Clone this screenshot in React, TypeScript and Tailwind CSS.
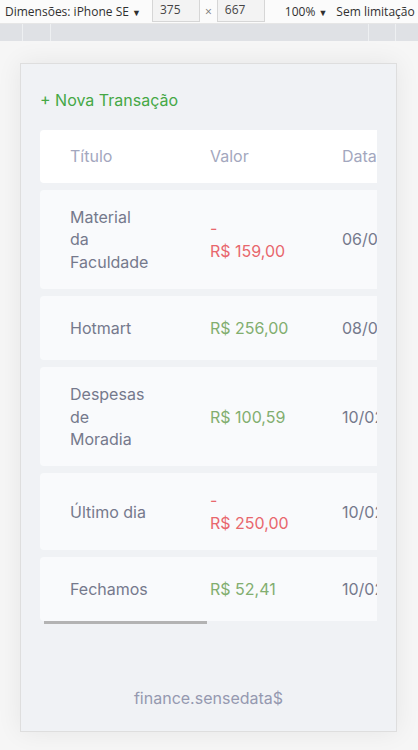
import React from "react";

type Row = { title: string[]; value: string[]; kind: "in" | "out"; date: string };

const rows: Row[] = [
  { title: ["Material", "da", "Faculdade"], value: ["-", "R$ 159,00"], kind: "out", date: "06/02/2021" },
  { title: ["Hotmart"], value: ["R$ 256,00"], kind: "in", date: "08/02/2021" },
  { title: ["Despesas", "de", "Moradia"], value: ["R$ 100,59"], kind: "in", date: "10/02/2021" },
  { title: ["Último dia"], value: ["-", "R$ 250,00"], kind: "out", date: "10/02/2021" },
  { title: ["Fechamos"], value: ["R$ 52,41"], kind: "in", date: "10/02/2021" },
];

function DevToolbar() {
  return (
    <div className="font-['Open_Sans','Liberation_Sans',sans-serif] text-[12px] text-[#303030]">
      <div className="flex h-[24px] items-center overflow-hidden whitespace-nowrap border-b border-[#e6e6e6] bg-[#fbfbfb]">
        <span className="ml-[5px] shrink-0">
          Dimensões: iPhone SE <span className="text-[9px]">▼</span>
        </span>
        <div className="ml-[11px] -mt-[4px] flex h-[24px] w-[48px] shrink-0 items-center border border-[#d6d6d6] bg-[#f3f3f3] pl-[7px] text-[#444]">375</div>
        <span className="mx-[5px] shrink-0 text-[#777]">×</span>
        <div className="-mt-[4px] flex h-[24px] w-[48px] shrink-0 items-center border border-[#d6d6d6] bg-[#f3f3f3] pl-[7px] text-[#444]">667</div>
        <span className="ml-[20px] shrink-0">
          100% <span className="text-[9px]">▼</span>
        </span>
        <span className="ml-[9px] shrink-0">
          Sem limitação <span className="text-[9px]">▼</span>
        </span>
      </div>
      <div className="flex h-[17px] bg-[#dfe1e5]">
        <div className="ml-[22px] w-[1px] bg-[#eef0f2]" />
        <div className="ml-[27px] w-[1px] bg-[#eef0f2]" />
        <div className="ml-auto w-[1px] bg-[#eef0f2]" />
        <div className="ml-[26px] mr-[22px] w-[1px] bg-[#eef0f2]" />
      </div>
    </div>
  );
}

function Lines({ lines }: { lines: string[] }) {
  return (
    <>
      {lines.map((l, i) => (
        <span key={i} className="block whitespace-nowrap">
          {l}
        </span>
      ))}
    </>
  );
}

export default function App() {
  return (
    <div className="min-h-screen bg-[#f6f6f6]">
      <DevToolbar />
      <div className="pl-[20px] pt-[22px]">
        <div className="flex h-[669px] w-[377px] flex-col border border-[#dedede] bg-[#f0f2f5] px-[19px] pt-[24px] font-['Inter','Noto_Sans',sans-serif] shadow-[0_0_24px_rgba(0,0,0,0.07)]">
          <button className="self-start text-[16px] leading-[24px] text-[#45a845]">+ Nova Transação</button>

          <div className="mt-[18px] w-[337px] overflow-hidden">
            <div className="flex w-[680px] flex-col gap-[7px] text-[16px] leading-[22.4px]">
              <div className="flex h-[53px] items-center rounded-[4px] bg-white text-[#a3a7be]">
                <div className="w-[140px] px-[30px]">Título</div>
                <div className="w-[132px] px-[30px]">Valor</div>
                <div className="px-[30px]">Data</div>
              </div>
              {rows.map((r, i) => (
                <div key={i} className="flex min-h-[64px] items-center rounded-[4px] bg-[#f9fafc] py-[16px]">
                  <div className="w-[140px] px-[30px] text-[#75798c]">
                    <Lines lines={r.title} />
                  </div>
                  <div className={`w-[132px] px-[30px] ${r.kind === "in" ? "text-[#82ae6f]" : "text-[#e8676d]"}`}>
                    <Lines lines={r.value} />
                  </div>
                  <div className="px-[30px] text-[#75798c]">{r.date}</div>
                </div>
              ))}
            </div>
            <div className="ml-[4px] h-[3px] w-[163px] bg-[#b3b3b3]" />
          </div>

          <footer className="mt-auto pb-[21px] text-center text-[16px] leading-[24px] text-[#9599b0]">finance.sensedata$</footer>
        </div>
      </div>
    </div>
  );
}
